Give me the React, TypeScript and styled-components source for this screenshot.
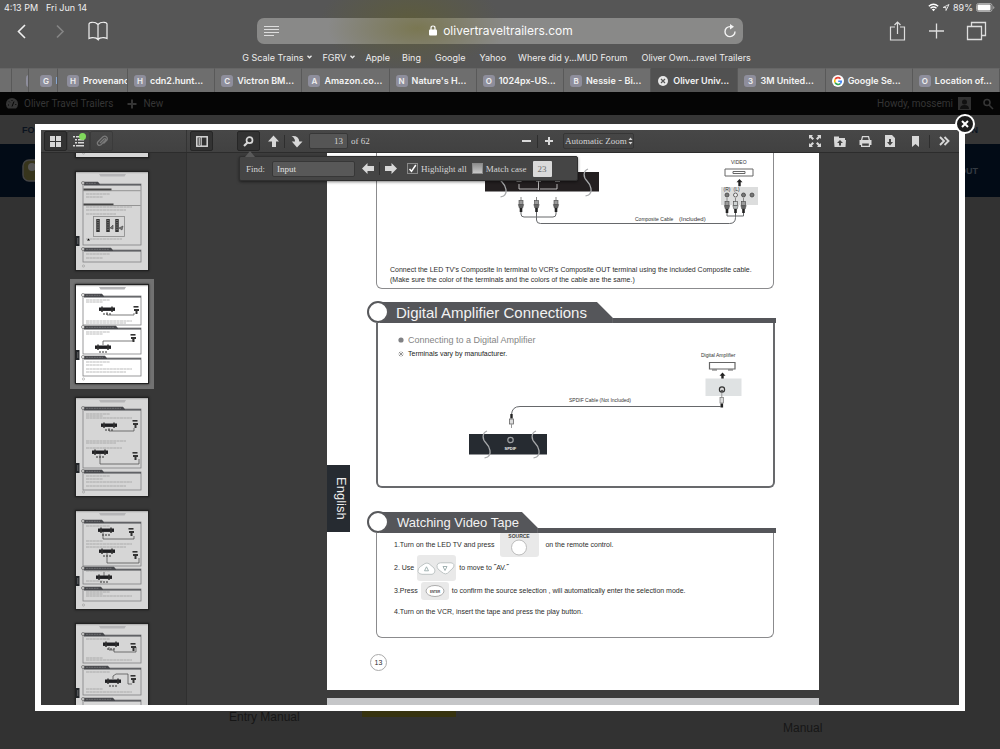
import React from "react";
import styled, { createGlobalStyle } from "styled-components";

const Global = createGlobalStyle`
  * { box-sizing: border-box; }
  html, body { margin: 0; height: 100%; overflow: hidden; background: #323232; }
  button, input, select { font: inherit; color: inherit; margin: 0; }
  svg { display: block; flex-shrink: 0; }
`;

const sans = `"Liberation Sans", Arial, sans-serif`;
const serif = `"Liberation Serif", "Times New Roman", serif`;

const Screen = styled.div`
  position: relative;
  min-height: 100vh;
  display: flex;
  flex-direction: column;
  overflow: hidden;
  font-family: Inter, sans-serif;
`;

/* ---------- browser ---------- */
const Browser = styled.header`
  color: #f0f0f0;
  background:
    radial-gradient(ellipse 90px 50px at 41% 22px, rgba(98, 96, 44, 0.6), rgba(98, 96, 44, 0)),
    #565656;
`;
const StatusBar = styled.div`
  display: flex;
  justify-content: space-between;
  height: 15px;
  padding: 0 5px 0 4px;
  font-size: 9px;
  line-height: 15px;
`;
const StatusGroup = styled.div<{ $gap: number }>`
  display: flex;
  align-items: center;
  gap: ${(p) => p.$gap}px;
`;
const AddressRow = styled.div`
  display: grid;
  grid-template-columns: 1fr minmax(0, 486px) 1fr;
  align-items: center;
  height: 31px;
`;
const IconGroup = styled.div<{ $end?: boolean }>`
  display: flex;
  align-items: center;
  justify-content: ${(p) => (p.$end ? "flex-end" : "flex-start")};
  gap: ${(p) => (p.$end ? 18 : 16)}px;
  padding: ${(p) => (p.$end ? "0 13px 0 0" : "0 0 0 11px")};
`;
const PlainButton = styled.button<{ $dim?: boolean }>`
  display: flex;
  align-items: center;
  justify-content: center;
  border: 0;
  padding: 0;
  background: none;
  opacity: ${(p) => (p.$dim ? 0.3 : 1)};
`;
const Address = styled.div`
  display: flex;
  align-items: center;
  justify-content: space-between;
  height: 26px;
  padding: 0 6px;
  border-radius: 7px;
  background: radial-gradient(ellipse 90px 40px at 33% 40%, #7a7752, rgba(122, 119, 82, 0) 100%), #898988;
`;
const Domain = styled.div`
  display: flex;
  align-items: center;
  gap: 6px;
  font-size: 12px;
  color: #fafafa;
`;
const Favorites = styled.nav`
  display: flex;
  justify-content: center;
  align-items: center;
  gap: 12px;
  height: 22px;
  padding-right: 5px;
`;
const Favorite = styled.a<{ $wide?: boolean; $menu?: boolean }>`
  display: flex;
  align-items: center;
  gap: 4px;
  padding: 0 ${(p) => (p.$wide ? 2 : 0)}px;
  margin-right: ${(p) => (p.$menu ? -2 : 0)}px;
  font-size: 9px;
  color: #ededed;
  text-decoration: none;
  white-space: nowrap;
`;
const Tabs = styled.div`
  display: flex;
  height: 24px;
`;
const Tab = styled.button<{ $width?: number; $active?: boolean }>`
  flex: ${(p) => (p.$width ? `0 0 ${p.$width}px` : "1 1 0")};
  min-width: 0;
  display: flex;
  align-items: center;
  gap: 4px;
  padding: 0 0 0 ${(p) => (p.$width === 29 ? 11 : p.$width === 17 ? 14 : p.$width === 70 ? 9 : 6)}px;
  border: 0;
  border-right: 1px solid #595959;
  border-top: 1px solid ${(p) => (p.$active ? "#515151" : "#666")};
  background: ${(p) => (p.$active ? "#515151" : "#6e6e6e")};
  color: #f4f4f4;
  font-size: 9px;
  font-weight: 600;
  white-space: nowrap;
  overflow: hidden;
`;
const Letter = styled.span`
  flex: 0 0 12px;
  height: 12px;
  border-radius: 3px;
  background: #8e8e9c;
  color: #eee;
  font-size: 8px;
  line-height: 12px;
  text-align: center;
`;

/* ---------- web page behind the lightbox ---------- */
const AdminBar = styled.div`
  display: flex;
  align-items: center;
  justify-content: space-between;
  height: 23px;
  padding: 0 6px;
  background: #050505;
  color: #353535;
  font-family: Roboto, sans-serif;
  font-size: 10px;
`;
const AdminGroup = styled.div`
  display: flex;
  align-items: center;
  gap: 5px;
`;
const AdminLink = styled.a<{ $push?: boolean }>`
  display: flex;
  align-items: center;
  gap: 6px;
  margin-left: ${(p) => (p.$push ? 9 : 0)}px;
  color: inherit;
  text-decoration: none;
`;
const SiteTop = styled.div`
  display: flex;
  justify-content: space-between;
  align-items: center;
  height: 29px;
  padding: 0 22px;
  background: #363636;
  color: #0b131f;
  font: 700 9px ${sans};
`;
const SiteNav = styled.div`
  display: flex;
  justify-content: space-between;
  align-items: center;
  height: 53px;
  padding: 0 22px;
  background: #020b16;
  color: #343b42;
  font: 700 9px ${sans};
`;
const SiteBody = styled.main`
  flex: 1;
  display: flex;
  flex-direction: column;
  justify-content: flex-end;
  background: #323232;
`;
const Manuals = styled.div`
  display: grid;
  grid-template-columns: 229fr 133fr 94fr 327fr 217fr;
  height: 38px;
  color: #161616;
  font: 12px ${sans};
  line-height: 12px;
`;
const ManualName = styled.div<{ $col: number; $low?: boolean }>`
  grid-column: ${(p) => p.$col};
  grid-row: 1;
  padding-top: ${(p) => (p.$low ? 11 : 0)}px;
`;
const GoldEdge = styled.div`
  grid-column: 3;
  grid-row: 1;
  height: 6px;
  background: #37330f;
`;

/* ---------- lightbox ---------- */
const Lightbox = styled.section`
  position: absolute;
  inset: 124px 35px 38px;
  display: flex;
  flex-direction: column;
  border: 6px solid #fff;
  background: #3c3c3c;
  font-family: ${serif};
  font-size: 9px;
  color: #d4d4d4;
`;
const CloseButton = styled.button`
  position: absolute;
  top: -16px;
  right: -16px;
  width: 20px;
  height: 20px;
  display: flex;
  align-items: center;
  justify-content: center;
  padding: 0;
  border: 2px solid #fff;
  border-radius: 50%;
  background: #1c1c1c;
  z-index: 5;
`;
const Toolbar = styled.div`
  display: flex;
  flex: 0 0 23px;
  background: linear-gradient(#474747, #414141);
  border-bottom: 1px solid #2c2c2c;
`;
const SidebarTools = styled.div`
  flex: 0 0 146px;
  display: flex;
  align-items: center;
  padding-left: 3px;
  border-right: 1px solid #343434;
`;
const MainTools = styled.div`
  flex: 1;
  display: grid;
  grid-template-columns: 1fr auto 1fr;
  align-items: center;
`;
const ToolGroup = styled.div<{ $end?: boolean }>`
  display: flex;
  align-items: center;
  justify-content: ${(p) => (p.$end ? "flex-end" : "flex-start")};
  padding: ${(p) => (p.$end ? "0 4px 0 0" : "0 0 0 3px")};
  gap: ${(p) => (p.$end ? 3 : 0)}px;
`;
const Tool = styled.button<{ $on?: boolean; $framed?: boolean; $dim?: boolean; $after?: number }>`
  position: relative;
  display: flex;
  align-items: center;
  justify-content: center;
  width: ${(p) => (p.$on || p.$framed ? 23 : 22)}px;
  height: 20px;
  padding: 0;
  margin-right: ${(p) => p.$after ?? 0}px;
  border: 1px solid ${(p) => (p.$on ? "#262626" : p.$framed ? "#3b3b3b" : "transparent")};
  border-radius: 2px;
  background: ${(p) => (p.$on ? "#333" : "transparent")};
  color: ${(p) => (p.$dim ? "#7a7a7a" : "#d8d8d8")};
`;
const Dot = styled.span`
  position: absolute;
  top: 1px;
  right: 3px;
  width: 7px;
  height: 7px;
  border-radius: 50%;
  background: #80d85c;
`;
const Split = styled.span`
  width: 1px;
  height: 13px;
  background: #2e2e2e;
`;
const PageField = styled.input`
  width: 39px;
  height: 16px;
  margin: 0 3px 0 2px;
  padding: 0 4px;
  border: 1px solid #373737;
  border-radius: 2px;
  background: #555;
  text-align: right;
`;
const ZoomSelect = styled.select`
  appearance: none;
  width: 71px;
  height: 16px;
  margin-left: 3px;
  padding: 0 0 0 1px;
  border: 1px solid #363636;
  border-radius: 2px;
  background: transparent;
`;
const ZoomWrap = styled.span`
  position: relative;
  display: flex;
`;
const ZoomArrows = styled.svg`
  position: absolute;
  right: 1px;
  top: 4px;
  pointer-events: none;
`;
const FindBar = styled.form`
  position: absolute;
  top: 26px;
  left: 198px;
  z-index: 3;
  display: flex;
  align-items: center;
  height: 25px;
  width: 339px;
  padding: 0 6px;
  border: 1px solid #2f2f2f;
  border-radius: 2px;
  background: #454545;
  box-shadow: 0 1px 3px rgba(0, 0, 0, 0.5);
  &::before {
    content: "";
    position: absolute;
    top: -6px;
    left: 5px;
    border: 5px solid transparent;
    border-top: 0;
    border-bottom: 6px solid #5a5a5a;
  }
`;
const FindField = styled.input`
  width: 83px;
  height: 16px;
  margin: 0 2px 0 7px;
  padding: 0 4px;
  border: 1px solid #373737;
  border-radius: 2px;
  background: #585858;
  color: #e2e2e2;
`;
const Check = styled.label`
  display: flex;
  align-items: center;
  gap: 3px;
  margin-left: 5px;
  white-space: nowrap;
`;
const CheckBox = styled.input`
  appearance: none;
  width: 11px;
  height: 11px;
  border: 1px solid #8a8a8a;
  background: linear-gradient(#8f8f8f, #c8c8c8);
  &:checked {
    background:
      url("data:image/svg+xml,%3Csvg xmlns='http://www.w3.org/2000/svg' viewBox='0 0 9 9'%3E%3Cpath d='M1.5 5l2 2.3L7.8 1' fill='none' stroke='white' stroke-width='1.5'/%3E%3C/svg%3E")
      center / 9px no-repeat,
      #4b4b4b;
  }
`;
const FindCount = styled.output`
  width: 19px;
  height: 16px;
  margin-left: 6px;
  border-radius: 1px;
  background: #dadada;
  color: #6d6d6d;
  line-height: 16px;
  text-align: center;
`;
const Panes = styled.div`
  flex: 1;
  min-height: 0;
  display: flex;
`;
const Sidebar = styled.aside`
  flex: 0 0 146px;
  overflow: hidden;
  background: #373737;
  border-right: 1px solid #2f2f2f;
`;
const ThumbList = styled.div`
  display: flex;
  flex-direction: column;
  align-items: center;
  gap: 3px;
  margin-top: -100px;
  padding-right: 3px;
`;
const Thumb = styled.a<{ $selected?: boolean }>`
  padding: 5px;
  background: ${(p) => (p.$selected ? "#727272" : "transparent")};
`;
const ThumbPage = styled.div<{ $selected?: boolean }>`
  border: 1px solid #222;
  box-shadow: 0 0 2px #1a1a1a;
  background: ${(p) => (p.$selected ? "#fff" : "#d6d6d6")};
`;
const Viewer = styled.div`
  flex: 1;
  min-width: 0;
  overflow: hidden;
  display: flex;
  flex-direction: column;
  align-items: center;
  gap: 8px;
`;
const Paper = styled.article`
  position: relative;
  flex: 0 0 537px;
  width: 492px;
  padding: 0 43px 0 49px;
  background: #fff;
  color: #2c2c2c;
  font-family: ${sans};
  font-size: 7px;
`;
const NextPaper = styled.div`
  flex: 0 0 20px;
  width: 492px;
  background: #c5c6c8;
`;
const Frame = styled.div<{ $height: number; $thin?: boolean; $narrow?: boolean }>`
  display: grid;
  align-content: start;
  height: ${(p) => p.$height}px;
  margin-right: ${(p) => (p.$narrow ? 2 : 1)}px;
  border: ${(p) => (p.$thin ? 1 : 2)}px solid ${(p) => (p.$thin ? "#8b8b8d" : "#68696c")};
  border-top: 0;
  border-radius: 0 0 6px 6px;
`;
const FrameText = styled.p`
  margin: 3px 0 0 13px;
  line-height: 10px;
  white-space: nowrap;
`;
const Heading = styled.div<{ $top: number }>`
  position: relative;
  display: flex;
  align-items: flex-end;
  height: 21px;
  margin-top: ${(p) => p.$top}px;
  &::after {
    content: "";
    flex: 1;
    height: 5px;
    background: #55565a;
  }
`;
const Ring = styled.span`
  position: absolute;
  left: -9px;
  top: -1px;
  width: 22px;
  height: 22px;
  border: 2px solid #58595c;
  border-radius: 50%;
  background: #fff;
`;
const Title = styled.h2<{ $small?: boolean }>`
  height: 21px;
  margin: 0;
  padding: 0 ${(p) => (p.$small ? 19 : 26)}px 0 ${(p) => (p.$small ? 21 : 20)}px;
  background: #55565a;
  clip-path: polygon(4px 0, calc(100% - 16px) 0, 100% 16px, 100% 100%, 4px 100%);
  color: #f2f2f2;
  font-size: ${(p) => (p.$small ? 13 : 15)}px;
  font-weight: 400;
  line-height: 21px;
  white-space: nowrap;
`;
const Stack = styled.div`
  display: grid;
  & > * { grid-area: 1 / 1; }
`;
const Notes = styled.ul`
  margin: 11px 0 0;
  padding: 0 0 0 20px;
  list-style: none;
`;
const Note = styled.li<{ $lead?: boolean }>`
  display: flex;
  align-items: center;
  gap: 4px;
  height: ${(p) => (p.$lead ? 12 : 15)}px;
  font-size: ${(p) => (p.$lead ? 9 : 7)}px;
  color: ${(p) => (p.$lead ? "#858585" : "#222")};
`;
const Steps = styled.ol`
  margin: 0;
  padding: 0 0 0 17px;
  list-style: none;
`;
const Step = styled.li<{ $last?: boolean; $loose?: boolean }>`
  display: flex;
  align-items: center;
  gap: ${(p) => (p.$loose ? 6 : 3)}px;
  height: ${(p) => (p.$last ? 18 : 23)}px;
  white-space: nowrap;
`;
const Language = styled.div`
  position: absolute;
  left: 0;
  top: 312px;
  width: 23px;
  height: 67px;
  background: #262b31;
  color: #eee;
  font-size: 13px;
  line-height: 16px;
  text-align: center;
  writing-mode: vertical-rl;
  padding-right: 1px;
`;
const Folio = styled.div`
  width: 17px;
  height: 17px;
  margin: 16px 0 0 -6px;
  border: 1px solid #aaa;
  border-radius: 50%;
  font-size: 7px;
  line-height: 15px;
  text-align: center;
`;

/* ---------- drawings ---------- */
const Chevron = ({ flip }: { flip?: boolean }) => (
  <svg width="22" height="20" viewBox="0 0 22 20" fill="none" stroke="currentColor" strokeWidth="1.6">
    <path d={flip ? "M8 4.5l6 6-6 6" : "M14 4l-6.5 6.500L14 17"} />
  </svg>
);
const Plug = ({ x, y, pale }: { x: number; y: number; pale?: boolean }) => (
  <g transform={`translate(${x} ${y})`}>
    <path d="M0 -8v4" stroke="#888" strokeWidth="1" />
    <rect x="-2" y="-4.500" width="4" height="4" fill={pale ? "#cfd3d3" : "#9a9a9a"} stroke="#444" strokeWidth=".6" />
    <path d="M-2.700 -.5h5.400l-1 3.500h-3.400z" fill={pale ? "#b5baba" : "#666"} stroke="#444" strokeWidth=".5" />
    <rect x="-1.300" y="3" width="2.600" height="4" fill="#222" />
  </g>
);
const Wave = ({ x, y }: { x: number; y: number }) => (
  <path
    d={`M${x} ${y}c-5 2 -5 8 -1 12s6 11 1.500 14l-3 1`}
    fill="none"
    stroke="#a7a9ab"
    strokeWidth="1.300"
  />
);
const UpArrow = ({ x, y }: { x: number; y: number }) => (
  <path d={`M${x} ${y}l3 3.200h-1.800v4h-2.400v-4h-1.800z`} fill="#222" />
);

const CompositeDiagram = () => (
  <svg width="396" height="109" viewBox="377 153 396 109" fontFamily={sans} fill="#333">
    <rect x="485" y="172" width="114" height="19.500" fill="#231f20" />
    <Wave x={503} y={170} />
    <Wave x={588} y={169} />
    <g fill="none" stroke="#ddd">
      <path d="M519 184v5h19M557 184v5h-17M538.500 180v10" strokeWidth=".8" />
      <path d="M516.500 181h5M536 181h5M555 181h5" strokeWidth="1.200" />
    </g>
    <Plug x={521} y={205} />
    <Plug x={536.500} y={205} />
    <Plug x={556} y={205} />
    <g fill="none" stroke="#66686b">
      <path d="M521 212v2q0 3 3 3h29q3 0 3-3v-2" />
      <path d="M536.500 212v8q0 3.500 4 3.500h189q6 0 6-6v-5" />
      <path d="M727 212v4h16.500v-4" />
    </g>
    <text x="731" y="163.500" fontSize="5">VIDEO</text>
    <path d="M725 169h28v7h-28zM733 171.500h12v2h-12z" fill="none" stroke="#666" />
    <UpArrow x={739.500} y={179} />
    <rect x="721" y="187" width="37" height="18" fill="#dcdddd" />
    <text x="723.500" y="190.500" fontSize="5">(R)</text>
    <text x="733.500" y="190.500" fontSize="5">(L)</text>
    {[727, 735.5, 743.5, 752].map((x) => (
      <circle key={x} cx={x} cy="195" r="2" fill={x === 735.5 ? "#eee" : "#777"} stroke="#444" strokeWidth=".8" />
    ))}
    <Plug x={727} y={206} />
    <Plug x={735.500} y={206} pale />
    <Plug x={743.500} y={206} />
    <text x="635" y="221" fontSize="5">Composite Cable</text>
    <text x="679" y="221" fontSize="6">(Included)</text>
  </svg>
);

const SpdifDiagram = () => (
  <svg width="394" height="163" viewBox="378 323 394 163" fontFamily={sans} fill="#333">
    <text x="701" y="357" fontSize="5">Digital Amplifier</text>
    <path d="M709.500 362.500h25.500v6.500h-25.500z" fill="none" stroke="#666" strokeWidth="1.200" />
    <path d="M712 370h5M728 370h5" stroke="#666" />
    <UpArrow x={722.500} y={372.500} />
    <rect x="705.500" y="378.500" width="36" height="17.500" fill="#dfe2e3" />
    <circle cx="722" cy="389.500" r="2.600" fill="#ddd" stroke="#333" strokeWidth="1.200" />
    <path d="M720.500 391.500l1.500-2 1.500 2z" fill="#333" />
    <path d="M721.800 393v5" stroke="#999" />
    <rect x="720" y="397.500" width="3.600" height="5.500" fill="#ddd" stroke="#777" strokeWidth=".7" />
    <rect x="720.500" y="403.500" width="2.600" height="4" fill="#222" />
    <path d="M721 406.500H520q-8 0-8.500 8" fill="none" stroke="#66686b" />
    <text x="569" y="402" fontSize="5">SPDIF Cable (Not Included)</text>
    <rect x="510.300" y="414" width="2.400" height="4.500" fill="#222" />
    <rect x="509.500" y="419" width="4" height="5" fill="#ddd" stroke="#666" strokeWidth=".8" />
    <path d="M511.500 424v4" stroke="#999" />
    <rect x="469" y="434" width="78" height="20.500" fill="#262b31" />
    <Wave x={487} y={431} />
    <Wave x={536} y={431} />
    <circle cx="510.500" cy="440" r="2.700" fill="none" stroke="#9da0a3" strokeWidth="1.200" />
    <text x="504.500" y="449.500" fontSize="4" fontWeight="700" fill="#eee">SPDIF</text>
  </svg>
);

const SourceKey = () => (
  <svg width="39" height="25" viewBox="0 0 39 25">
    <rect width="39" height="25" rx="3" fill="#e9e9e9" />
    <text x="19" y="6" textAnchor="middle" fontFamily={sans} fontSize="5" fontWeight="700" fill="#444">SOURCE</text>
    <circle cx="19" cy="15.500" r="7.500" fill="#fff" stroke="#b4b4b4" strokeWidth=".9" />
  </svg>
);
const ArrowKeys = () => (
  <svg width="39" height="26" viewBox="0 0 39 26">
    <rect width="39" height="26" rx="3" fill="#e9e9e9" />
    <g fill="#fff" stroke="#b9bfbf" strokeWidth=".9">
      <path d="M1 16.500Q.5 13.500 3.500 11.500L8 8.500Q10 7.500 12 8.700L17 13Q18.500 15 17.700 17T15 19.300H5Q1.800 19.300 1 16.500z" />
      <path d="M20 10.500Q19.500 13 22 15L26.500 18.300Q28.500 19.500 30.500 18.200L36 13Q37.500 11 36.800 9.500T34 7.800H23.500Q20.500 7.800 20 10.500z" />
      <path d="M7.500 15.800l2-4 2 4zM26 11.500h4l-2 4z" stroke="#9aa" />
    </g>
  </svg>
);
const EnterKey = () => (
  <svg width="28" height="18" viewBox="0 0 28 18">
    <rect width="28" height="18" rx="3" fill="#e9e9e9" />
    <ellipse cx="14" cy="9" rx="9" ry="5.500" fill="#fff" stroke="#999" strokeWidth=".8" />
    <text x="14" y="10.500" textAnchor="middle" fontFamily={sans} fontSize="3" fontWeight="700" fill="#444">ENTER</text>
  </svg>
);

type Section = { y: number; end: number; tab: number; lines: number[] };
type ThumbData = { sections: Section[]; units: [number, number][]; wires: string; sources: [number, number][]; tabY: number; remotes?: boolean };

const thumbs: ThumbData[] = [
  { sections: [{ y: 70, end: 88, tab: 20, lines: [76] }], units: [], wires: "", sources: [], tabY: 64 },
  {
    sections: [
      { y: 11, end: 72, tab: 15, lines: [22, 25, 35, 38, 42, 67] },
      { y: 77, end: 89, tab: 28, lines: [82, 86] },
    ],
    units: [], wires: "", sources: [], tabY: 64, remotes: true,
  },
  {
    sections: [
      { y: 10, end: 39, tab: 19, lines: [15, 17, 36, 38] },
      { y: 42, end: 68, tab: 33, lines: [47, 49] },
      { y: 72, end: 90, tab: 22, lines: [77, 80, 84, 87] },
    ],
    units: [[31, 24], [27, 62]],
    wires: "M31 27v3h27v-2M27 60v-4h30v-4",
    sources: [[60, 23], [57, 51]], tabY: 65,
  },
  {
    sections: [
      { y: 10, end: 69, tab: 40, lines: [16, 18, 20, 43, 45, 50] },
      { y: 73, end: 91, tab: 19, lines: [78, 81, 84, 88] },
    ],
    units: [[33, 27], [24, 54]],
    wires: "M33 30v3h25v-3M24 56v10h39v-5",
    sources: [[59, 24], [59, 56]], tabY: 65,
  },
  {
    sections: [
      { y: 10, end: 54, tab: 19, lines: [15, 30, 33, 36] },
      { y: 57, end: 72, tab: 31, lines: [60, 70] },
      { y: 77, end: 89, tab: 18, lines: [81, 83, 85] },
    ],
    units: [[30, 19], [31, 40], [28, 66]],
    wires: "M27 21v7h31v-3M31 42v10h32v-5M28 65v-4",
    sources: [[55, 19], [59, 42]], tabY: 65,
  },
  {
    sections: [
      { y: 10, end: 38, tab: 20, lines: [15, 34, 36] },
      { y: 43, end: 70, tab: 25, lines: [48, 65, 68] },
      { y: 75, end: 98, tab: 30, lines: [] },
    ],
    units: [[35, 20], [37, 57]],
    wires: "M33 23v3h5v2h22v-5M37 55v-3q3-3 6-2h9v10h4",
    sources: [[57, 21], [57, 53]], tabY: 64,
  },
];

const ThumbDrawing = ({ data, selected }: { data: ThumbData; selected?: boolean }) => {
  const paper = selected ? "#fff" : "#d6d6d6";
  return (
    <svg width="72" height="98" viewBox="0 0 72 98">
      <path d="M0 .7h72" stroke="#aaa" />
      <path d="M23 2h27l-1.500 2.500h-24z" fill="#b5b5b7" />
      {data.sections.map((s) => (
        <g key={s.y}>
          <rect x="7" y={s.y + 1} width="58" height={s.end - s.y} fill="none" stroke="#808083" strokeWidth=".8" />
          <path d={`M8 ${s.y - 1.2}h${s.tab - 1}l2 2.400H65v1.300H8z`} fill="#47484c" />
          <path d={`M10 ${s.y + 0.3}h${s.tab - 5}`} stroke="#999" strokeWidth=".5" strokeDasharray="2 .6" />
          <circle cx="7" cy={s.y} r="1.500" fill={paper} stroke="#555" strokeWidth=".6" />
          {s.lines.map((l, i) => (
            <path key={l} d={`M10 ${l}h${[24, 17, 46, 40, 30, 36][i]}`} stroke="#8f8f8f" strokeWidth=".6" strokeDasharray="3 .4" />
          ))}
        </g>
      ))}
      {data.remotes && (
        <g>
          <path d="M7.500 17.500h28M7.500 32.300h30" stroke="#444" strokeWidth="1.800" />
          <path d="M7.500 18.700h57M7.500 33.500h57" stroke="#777" strokeWidth=".7" />
          <rect x="17.500" y="44.500" width="31" height="20" fill="none" stroke="#888" strokeWidth=".8" />
          <path d="M22 47v13M32 47v13M41 47v13" stroke="#333" strokeWidth="3.500" />
          <path d="M22 48v11M32 48v11M41 48v11" stroke="#aaa" strokeWidth="1" strokeDasharray="1 1.200" />
          <path d="M34 56l3-3v4zM43 56l4-2-1 4z" fill="#777" stroke="#444" strokeWidth=".6" />
          <path d="M11 68.500l1.500-2 1.500 2z" />
        </g>
      )}
      <path d={data.wires} fill="none" stroke="#444" strokeWidth=".7" />
      {data.units.map(([x, y]) => (
        <g key={`${x}-${y}`}>
          <rect x={x - 8} y={y - 1.5} width="16" height="3.400" fill="#1f1f22" />
          <path d={`M${x - 5} ${y - 2.5}v5.500M${x + 5} ${y - 2.5}v5.500`} stroke="#333" strokeWidth="1.500" />
          <path d={`M${x - 3} ${y + 4}v2M${x} ${y + 4}v2M${x + 3} ${y + 4}v2`} stroke="#333" strokeWidth="1" />
        </g>
      ))}
      {data.sources.map(([x, y]) => (
        <g key={`${x}-${y}`} fill="#333">
          <rect x={x - 2.5} y={y - 2} width="5" height="1.600" />
          <path d={`M${x - 2} ${y + 1}h5v2h-1.500v3h-2v-3h-1.500z`} />
        </g>
      ))}
      <rect y={data.tabY} width="3.500" height="10" fill="#222529" />
      <path d={`M1.800 ${data.tabY + 2}v6`} stroke="#888" strokeWidth=".7" />
      <circle cx="7.500" cy="94" r="1.100" fill="none" stroke="#999" strokeWidth=".6" />
    </svg>
  );
};

const arrowUp = "M6.500 .5L12 6.500H9V12H5V6.500H1z";
const Glyph = ({ d, w = 13, h = 13 }: { d: string; w?: number; h?: number }) => (
  <svg width={w} height={h} viewBox={`0 0 ${w} ${h}`} fill="currentColor" fillRule="evenodd">
    <path d={d} />
  </svg>
);

const favorites: { name: string; menu?: boolean; wide?: boolean }[] = [
  { name: "G Scale Trains", menu: true },
  { name: "FGRV", menu: true },
  { name: "Apple" },
  { name: "Bing" },
  { name: "Google", wide: true },
  { name: "Yahoo" },
  { name: "Where did y...MUD Forum" },
  { name: "Oliver Own...ravel Trailers", wide: true },
];
const tabs: { letter: string; name: string; width?: number }[] = [
  { letter: "", name: "", width: 12 },
  { letter: " ", name: "", width: 17 },
  { letter: "G", name: "I", width: 29 },
  { letter: "H", name: "Provenanc", width: 70 },
  { letter: "H", name: "cdn2.hunt..." },
  { letter: "C", name: "Victron BM..." },
  { letter: "A", name: "Amazon.co..." },
  { letter: "N", name: "Nature's H..." },
  { letter: "O", name: "1024px-US..." },
  { letter: "B", name: "Nessie - Bi..." },
  { letter: "x", name: "Oliver Univ..." },
  { letter: "3", name: "3M United..." },
  { letter: "google", name: "Google Se..." },
  { letter: "O", name: "Location of..." },
];

const TabIcon = ({ kind }: { kind: string }) => {
  if (kind === "") return null;
  if (kind === "x")
    return (
      <svg width="12" height="12" viewBox="0 0 12 12">
        <circle cx="6" cy="6" r="5" fill="#e8e8e8" />
        <path d="M4 4l4 4M8 4l-4 4" stroke="#555" strokeWidth="1.200" />
      </svg>
    );
  if (kind === "google")
    return (
      <svg width="12" height="12" viewBox="0 0 12 12" fill="none" strokeWidth="1.600">
        <circle cx="6" cy="6" r="6" fill="#fff" />
        <path d="M8.500 3.700A3.400 3.400 0 0 0 3.100 4.300" stroke="#ea4335" />
        <path d="M3.100 4.300a3.400 3.400 0 0 0 0 3.400" stroke="#fbbc05" />
        <path d="M3.100 7.700a3.400 3.400 0 0 0 5.200.9" stroke="#34a853" />
        <path d="M8.300 8.600A3.400 3.400 0 0 0 9.300 6.200H6.200" stroke="#4285f4" />
      </svg>
    );
  return <Letter>{kind}</Letter>;
};

export default function App() {
  return (
    <Screen>
      <Global />
      <Browser>
        <StatusBar>
          <StatusGroup $gap={8}>
            <span>4:13 PM</span>
            <span>Fri Jun 14</span>
          </StatusGroup>
          <StatusGroup $gap={3}>
            <svg width="11" height="9" viewBox="0 0 11 9" fill="none" stroke="#fff" strokeWidth="1.400">
              <path d="M.8 3.200Q5.500-.9 10.200 3.200M2.500 5.200Q5.500 2.600 8.500 5.200" />
              <path d="M3.800 6.500Q5.500 5 7.200 6.500L5.500 8.300z" fill="#fff" stroke="none" />
            </svg>
            <svg width="8" height="9" viewBox="0 0 8 9" fill="none" stroke="#ddd">
              <path d="M7 1.500L1 4.500h3v3z" />
            </svg>
            <span>89%</span>
            <svg width="19" height="9" viewBox="0 0 19 9">
              <rect x=".5" y=".5" width="15.500" height="8" rx="2" fill="none" stroke="#aaa" />
              <rect x="1.500" y="1.500" width="13" height="6" rx="1" fill="#fff" />
              <path d="M17.200 3v3q1.200-.5 1.200-1.500T17.200 3" fill="#aaa" />
            </svg>
          </StatusGroup>
        </StatusBar>
        <AddressRow>
          <IconGroup>
            <PlainButton aria-label="Back"><Chevron /></PlainButton>
            <PlainButton aria-label="Forward" $dim><Chevron flip /></PlainButton>
            <PlainButton aria-label="Bookmarks">
              <svg width="22" height="20" viewBox="0 0 22 20" fill="none" stroke="currentColor" strokeWidth="1.200">
                <path d="M11 3.500Q8.500 1 5 1.300 2 1.500 2 3v14.500q2-1 4.500-.8 3 0 4.500 1.800V3.500Q13.500 1 17 1.300q3 .2 3 1.700v14.500q-2-1-4.500-.8-3 0-4.500 1.800" />
              </svg>
            </PlainButton>
          </IconGroup>
          <Address>
            <svg width="16" height="12" viewBox="0 0 16 12" stroke="#ddd" strokeWidth="1.200">
              <path d="M1 1.500h15M1 4.500h15M1 7.500h15M1 10.500h10" />
            </svg>
            <Domain>
              <svg width="8" height="11" viewBox="0 0 8 11">
                <path d="M2 5V3q0-2 2-2t2 2v2" fill="none" stroke="#fff" strokeWidth="1.200" />
                <rect y="4.500" width="8" height="6" rx="1" fill="#fff" />
              </svg>
              olivertraveltrailers.com
            </Domain>
            <PlainButton aria-label="Reload">
              <svg width="14" height="14" viewBox="0 0 14 14" fill="none" stroke="#f4f4f4" strokeWidth="1.400">
                <path d="M12 7.500A5 5 0 1 1 7 2.600h1" />
                <path d="M7 0l4 2.700L7 5.400z" fill="#f4f4f4" stroke="none" />
              </svg>
            </PlainButton>
          </Address>
          <IconGroup $end>
            <PlainButton aria-label="Share">
              <svg width="22" height="22" viewBox="0 0 22 22" fill="none" stroke="#ddd" strokeWidth="1.200">
                <path d="M8 7H3.500v13h14V7H13M10.500 14V2M7.500 5l3-3 3 3" />
              </svg>
            </PlainButton>
            <PlainButton aria-label="New tab">
              <svg width="20" height="20" viewBox="0 0 20 20" stroke="#ddd" strokeWidth="1.300">
                <path d="M9.500 2.500v15M2 10h15" />
              </svg>
            </PlainButton>
            <PlainButton aria-label="Show tabs">
              <svg width="22" height="22" viewBox="0 0 22 22" fill="none" stroke="#ddd" strokeWidth="1.300">
                <path d="M2.500 6.500h14v13h-14zM6.500 6V2.500h14V15.500H17" />
              </svg>
            </PlainButton>
          </IconGroup>
        </AddressRow>
        <Favorites>
          {favorites.map((f) => (
            <Favorite key={f.name} href="#" $wide={f.wide} $menu={f.menu}>
              {f.name}
              {f.menu && (
                <svg width="5" height="4" viewBox="0 0 5 4" fill="none" stroke="#eee" strokeWidth="1.300">
                  <path d="M.5 .8l2 2 2-2" />
                </svg>
              )}
            </Favorite>
          ))}
        </Favorites>
        <Tabs>
          {tabs.map((t, i) => (
            <Tab key={i} $width={t.width} $active={t.letter === "x"} aria-label={t.name || "Tab"}>
              <TabIcon kind={t.letter} />
              {t.name}
            </Tab>
          ))}
        </Tabs>
      </Browser>

      <AdminBar>
        <AdminGroup>
          <AdminLink href="#">
            <svg width="12" height="11" viewBox="0 0 12 11" fill="currentColor">
              <path d="M2 10.500a6 6 0 1 1 8 0z" />
              <path d="M6 8.500l2-5M2 7h1M3 3.500l.8.800M6 2v1M9.300 6.500h1" stroke="#050505" />
            </svg>
            Oliver Travel Trailers
          </AdminLink>
          <AdminLink href="#" $push>
            <svg width="10" height="10" viewBox="0 0 10 10" stroke="currentColor" strokeWidth="2">
              <path d="M5 .5v9M.5 5h9" />
            </svg>
            New
          </AdminLink>
        </AdminGroup>
        <AdminGroup>
          Howdy, mossemi
          <svg width="13" height="13" viewBox="0 0 13 13">
            <rect width="13" height="13" fill="#303030" />
            <circle cx="6.500" cy="5" r="2.500" fill="#111" />
            <path d="M2 12q0-4 4.500-4t4.500 4z" fill="#111" />
          </svg>
          <svg width="18" height="12" viewBox="0 0 18 12" fill="none" stroke="currentColor" strokeWidth="1.600">
            <circle cx="11" cy="4.500" r="3" />
            <path d="M13 7l4 4" />
          </svg>
        </AdminGroup>
      </AdminBar>
      <SiteTop>
        <span>FO</span>
        <span>N</span>
      </SiteTop>
      <SiteNav>
        <svg width="24" height="24" viewBox="0 0 24 24">
          <rect x="1" y="1" width="22" height="21" rx="6" fill="#37351c" stroke="#444" strokeWidth="1.500" />
          <circle cx="10" cy="8" r="4" fill="#555" />
        </svg>
        <span>OUT</span>
      </SiteNav>
      <SiteBody>
        <Manuals>
          <ManualName $col={2}>Entry Manual</ManualName>
          <GoldEdge />
          <ManualName $col={5} $low>Manual</ManualName>
        </Manuals>
      </SiteBody>

      <Lightbox>
        <CloseButton aria-label="Close">
          <svg width="10" height="10" viewBox="0 0 10 10" stroke="#fff" strokeWidth="2">
            <path d="M2 2l6 6M8 2l-6 6" />
          </svg>
        </CloseButton>
        <Toolbar>
          <SidebarTools>
            <Tool $on aria-label="Thumbnails"><Glyph w={11} h={11} d="M0 0h5v5H0zM6 0h5v5H6zM0 6h5v5H0zM6 6h5v5H6z" /></Tool>
            <Tool $framed aria-label="Outline">
              <Glyph w={12} h={12} d="M0 1h2v1.500H0zM3 1h8v1.500H3zM2 4h2v1.500H2zM5 4h6v1.500H5zM2 7h2v1.500H2zM5 7h6v1.500H5zM0 10h2v1.500H0zM3 10h8v1.500H3z" />
              <Dot />
            </Tool>
            <Tool $framed $dim aria-label="Attachments">
              <svg width="12" height="12" viewBox="0 0 12 12" fill="none" stroke="currentColor" strokeWidth="1.300">
                <path d="M4 8l4-4q1-.8 1.500 0t-.3 1.500L5 9.700q-1.700 1.300-3 0t0-3L7 1.800q2-1.300 3.500.2t.2 3.300L7.500 8.500" />
              </svg>
            </Tool>
          </SidebarTools>
          <MainTools>
            <ToolGroup>
              <Tool $on $after={24} aria-label="Toggle sidebar">
                <svg width="12" height="11" viewBox="0 0 12 11" fill="none" stroke="currentColor" strokeWidth="1.500">
                  <rect x=".8" y=".8" width="10.400" height="9.400" />
                  <path d="M3.200 2v7M5.200 1v9" strokeWidth="1.100" />
                </svg>
              </Tool>
              <Tool $on $after={2} aria-label="Find">
                <svg width="11" height="11" viewBox="0 0 11 11" fill="none" stroke="currentColor" strokeWidth="1.700">
                  <circle cx="6.500" cy="4.200" r="3" />
                  <path d="M4.500 6.500L1 10" strokeWidth="2.200" />
                </svg>
              </Tool>
              <Tool aria-label="Previous page"><Glyph d={arrowUp} /></Tool>
              <Split />
              <Tool aria-label="Next page">
                <Glyph d="M7 12.500L1.800 6.500H5Q5 3 1.500 1Q9 .3 9.300 6.500H12.500z" />
              </Tool>
              <PageField aria-label="Page" defaultValue="13" />
              <span>of 62</span>
            </ToolGroup>
            <ToolGroup>
              <Tool aria-label="Zoom out"><Glyph w={9} h={2} d="M0 0h9v2H0z" /></Tool>
              <Split />
              <Tool aria-label="Zoom in"><Glyph w={8} h={8} d="M3 0h2v3h3v2H5v3H3V5H0V3h3z" /></Tool>
              <ZoomWrap>
                <ZoomSelect aria-label="Zoom">
                  <option>Automatic Zoom</option>
                </ZoomSelect>
                <ZoomArrows width="5" height="8" viewBox="0 0 5 8" fill="#d4d4d4">
                  <path d="M2.500 .5L4.500 3H.5zM2.500 7.500L.5 5h4z" />
                </ZoomArrows>
              </ZoomWrap>
            </ToolGroup>
            <ToolGroup $end>
              <Tool aria-label="Full screen">
                <Glyph w={12} h={12} d="M0 0h4L2.800 1.200 5 3.500 3.500 5 1.200 2.800 0 4zM12 0v4l-1.200-1.200L8.500 5 7 3.500l2.200-2.300L8 0zM0 12V8l1.200 1.200L3.500 7 5 8.500 2.800 10.800 4 12zM12 12H8l1.200-1.200L7 8.500 8.500 7l2.300 2.200L12 8z" />
              </Tool>
              <Tool aria-label="Open file">
                <Glyph w={12} h={11} d="M0 .5h5V2h6v2h1l-.5 7H.5L0 4zM6 4L3 7h2v2.500h2V7h2z" />
              </Tool>
              <Tool aria-label="Print">
                <Glyph w={13} h={11} d="M3 0h7l1 4h1.500v5H11v2H2V9H.5V4H2zM4 1.200L3.300 4h6.400L9 1.200zM3.200 7.500v2.300h6.600V7.500z" />
              </Tool>
              <Tool aria-label="Download">
                <Glyph w={10} h={12} d="M0 0h7l3 3v9H0zM4 4v3H2l3 3.500L8 7H6V4z" />
              </Tool>
              <Tool aria-label="Bookmark"><Glyph w={7} h={11} d="M0 0h7v11L3.500 8 0 11z" /></Tool>
              <Split />
              <Tool aria-label="More tools">
                <svg width="11" height="10" viewBox="0 0 11 10" fill="none" stroke="currentColor" strokeWidth="1.900">
                  <path d="M1 1l4 4-4 4M5.500 1l4 4-4 4" />
                </svg>
              </Tool>
            </ToolGroup>
          </MainTools>
        </Toolbar>

        <FindBar onSubmit={(e) => e.preventDefault()}>
          <label htmlFor="find">Find:</label>
          <FindField id="find" defaultValue="Input" />
          <Tool type="button" aria-label="Previous match"><Glyph w={12} h={11} d="M0 5.500L5.500 0v3H12v5H5.500v3z" /></Tool>
          <Split />
          <Tool type="button" aria-label="Next match"><Glyph w={12} h={11} d="M12 5.500L6.500 0v3H0v5h6.500v3z" /></Tool>
          <Check><CheckBox type="checkbox" defaultChecked />Highlight all</Check>
          <Check><CheckBox type="checkbox" />Match case</Check>
          <FindCount>23</FindCount>
        </FindBar>

        <Panes>
          <Sidebar>
            <ThumbList>
              {thumbs.map((t, i) => (
                <Thumb key={i} href="#" $selected={i === 2} aria-label={`Page ${i + 11}`}>
                  <ThumbPage $selected={i === 2}>
                    <ThumbDrawing data={t} selected={i === 2} />
                  </ThumbPage>
                </Thumb>
              ))}
            </ThumbList>
          </Sidebar>
          <Viewer>
            <Paper>
              <Frame $height={136} $thin $narrow>
                <CompositeDiagram />
                <FrameText>
                  Connect the LED TV’s Composite In terminal to VCR’s Composite OUT terminal using the included Composite cable.
                  <br />
                  (Make sure the color of the terminals and the colors of the cable are the same.)
                </FrameText>
              </Frame>

              <Heading $top={13}>
                <Title>Digital Amplifier Connections</Title>
                <Ring />
              </Heading>
              <Frame $height={165}>
                <Stack>
                  <Notes>
                    <Note $lead>
                      <svg width="6" height="6" viewBox="0 0 6 6"><circle cx="3" cy="3" r="2.600" fill="#808184" /></svg>
                      Connecting to a Digital Amplifier
                    </Note>
                    <Note>
                      <svg width="6" height="6" viewBox="0 0 6 6" stroke="#777" strokeWidth=".8">
                        <path d="M1 1l4 4M5 1l-4 4M3 .5v.8M3 4.700v.8M.5 3h.8M4.700 3h.8" />
                      </svg>
                      Terminals vary by manufacturer.
                    </Note>
                  </Notes>
                  <SpdifDiagram />
                </Stack>
              </Frame>

              <Heading $top={24}>
                <Title $small>Watching Video Tape</Title>
                <Ring />
              </Heading>
              <Frame $height={105} $thin $narrow>
                <Steps>
                  <Step $loose>1.Turn on the LED TV and press <SourceKey /> on the remote control.</Step>
                  <Step>2. Use <ArrowKeys /> to move to ˝AV.˝</Step>
                  <Step>3.Press <EnterKey /> to confirm the source selection , will automatically enter the selection mode.</Step>
                  <Step $last>4.Turn on the VCR, insert the tape and press the play button.</Step>
                </Steps>
              </Frame>
              <Folio>13</Folio>
              <Language>English</Language>
            </Paper>
            <NextPaper />
          </Viewer>
        </Panes>
      </Lightbox>
    </Screen>
  );
}
